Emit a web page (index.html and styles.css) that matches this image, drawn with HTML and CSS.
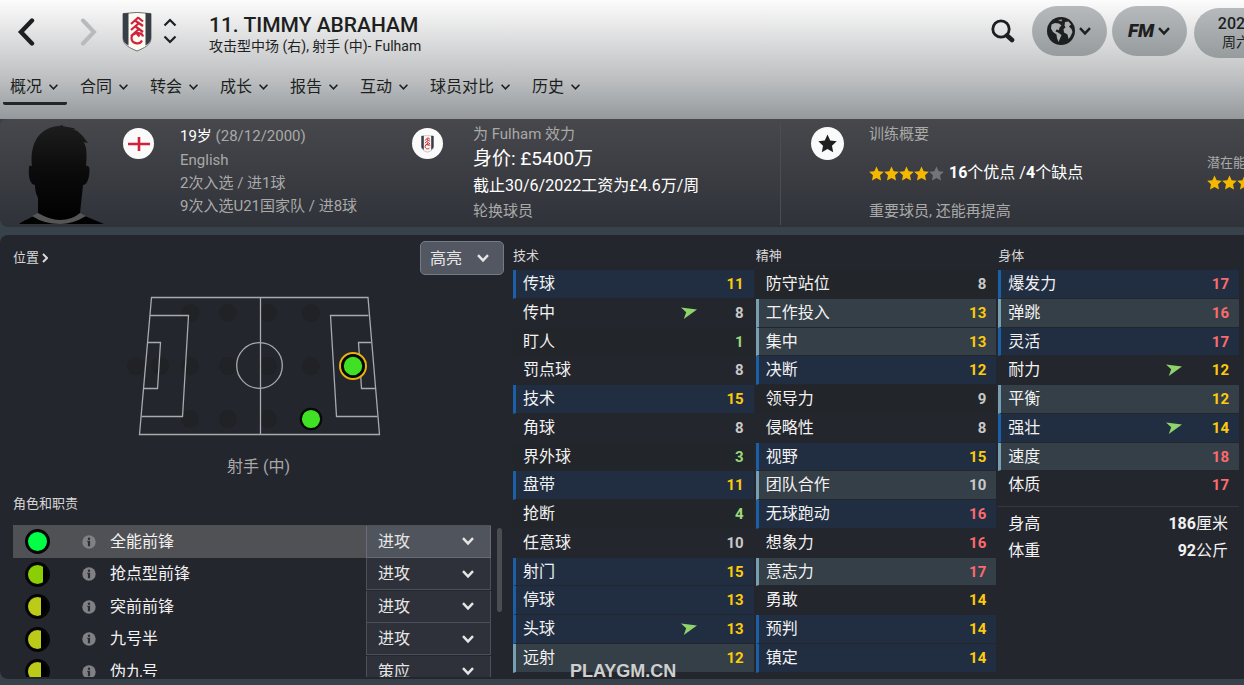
FILE: index.html
```html
<!DOCTYPE html>
<html lang="zh-CN"><head>
<meta charset="utf-8">
<meta name="viewport" content="width=device-width, initial-scale=1.0">
<title>Timmy Abraham</title>

<link rel="stylesheet" href="styles.css">

</head><body>

<svg class="defs" width="0" height="0">
	<symbol id="chevron" viewBox="0 0 14 10"><path d="M2 2.2 L7 7.4 L12 2.2" fill="none" stroke="currentColor" /></symbol>
	<symbol id="star" viewBox="0 0 20 20"><path d="M10 0.6 L12.9 6.9 L19.7 7.7 L14.7 12.4 L16 19.2 L10 15.9 L4 19.2 L5.3 12.4 L0.3 7.7 L7.1 6.9 Z" fill="currentColor" /></symbol>
	<symbol id="crest" viewBox="0 0 30 40">
		<path d="M1 1.6 Q15 -0.8 29 1.6 V26 C29 33 22 36 15 39 C8 36 1 33 1 26 Z" fill="#fbfbf2" stroke="#6c7073" stroke-width="1" />
		<path d="M1 1.6 L6.5 1 V33.6 C3 31.6 1 29 1 26 Z M29 1.6 L23.5 1 V33.6 C27 31.6 29 29 29 26 Z" fill="#363d45" />
		<path d="M9 12 L16.5 5.2 M13 8.500 L21 14 M9 18 L16.500 11.500 M13.500 14.500 L21 20 M9 24 L16.500 17.500 M16 5.500 L21 9.500 M21 24.500 C20 19.500 9.500 20 9.500 26 C9.500 31.500 17.500 33.500 20 28.500 M14 20.500 L17.500 24.500" fill="none" stroke="#d3203c" stroke-width="2.200" />
	</symbol>
	<symbol id="info" viewBox="0 0 14 14"><circle cx="7" cy="7" r="6.7" fill="currentColor" /><circle cx="7" cy="3.7" r="1.2" fill="#2b2d33" /><path d="M5.3 5.8 H8.1 V11.2 H5.9 V7 H5.3 Z" fill="#2b2d33" /></symbol>
	<symbol id="arrow" viewBox="0 0 16 12"><path d="M0 0.5 L16 2.4 L2.8 12 L5.2 5.2 Z" fill="#8fd36b" /></symbol>
</svg>

<header class="top">
	<div class="title-bar">
		<button class="back" aria-label="后退"><svg width="18" height="28" viewBox="0 0 18 28"><path d="M15 2.5 L4 14 L15 25.5" fill="none" stroke="#1d1f21" stroke-width="4.4" stroke-linecap="round" /></svg></button>
		<button class="forward" aria-label="前进"><svg width="18" height="28" viewBox="0 0 18 28"><path d="M3 2.5 L14 14 L3 25.5" fill="none" stroke="#b9babb" stroke-width="4" stroke-linecap="round" /></svg></button>
		<svg class="club" width="30" height="40"><use href="#crest" /></svg>
		<button class="switch" aria-label="切换球员"><svg width="14" height="28" viewBox="0 0 14 28"><path d="M1.5 8.5 L7 3 L12.5 8.5 M1.5 19.5 L7 25 L12.5 19.5" fill="none" stroke="#1d1f21" stroke-width="2.2" /></svg></button>
		<div class="name">
			<h1>11. TIMMY ABRAHAM</h1>
			<p>攻击型中场 (右), 射手 (中)- Fulham</p>
		</div>
		<div class="tools">
			<button class="search" aria-label="搜索"><svg width="24" height="24" viewBox="0 0 24 24"><circle cx="10" cy="10" r="8.2" fill="none" stroke="#1d1f21" stroke-width="2.8" /><path d="M16 16.5 L21 21" stroke="#1d1f21" stroke-width="4.6" stroke-linecap="round" /></svg></button>
			<button class="pill" aria-label="世界">
				<svg width="28" height="28" viewBox="0 0 28 28"><circle cx="14" cy="14" r="14" fill="#1d1f21" /><path d="M4.5 7.5 L8 6 L12 6.5 L14.5 8.5 L12.5 10.5 L12 13 L9.5 12.5 L8.5 14.5 L11 15.5 L14.5 18 L13 21.5 L11.5 25 L10 21 L9.5 17.5 L6 15 L4 11.5 Z M18 5 L21.5 4.5 L24 7.5 L22 9.5 L24.5 12 L25.5 15 L23.5 19.5 L21.5 22 L20.5 17.5 L17 15.5 L16.5 12 L18.5 10.5 L17.5 8.5 Z M11 3 L15 2.5 L14.5 4.5 Z" fill="#abafb1" /></svg>
				<svg width="14" height="10"><use href="#chevron" /></svg>
			</button>
			<button class="pill"><span class="fm">FM</span><svg width="14" height="10"><use href="#chevron" /></svg></button>
			<button class="pill date"><b>2020</b><span>周六</span></button>
		</div>
	</div>
	<nav>
		<a href="#" class="active">概况<svg><use href="#chevron" /></svg></a>
		<a href="#">合同<svg><use href="#chevron" /></svg></a>
		<a href="#">转会<svg><use href="#chevron" /></svg></a>
		<a href="#">成长<svg><use href="#chevron" /></svg></a>
		<a href="#">报告<svg><use href="#chevron" /></svg></a>
		<a href="#">互动<svg><use href="#chevron" /></svg></a>
		<a href="#">球员对比<svg><use href="#chevron" /></svg></a>
		<a href="#">历史<svg><use href="#chevron" /></svg></a>
	</nav>
</header>

<section class="summary">
	<svg class="portrait" width="88" height="102" viewBox="0 0 88 102">
		<defs><linearGradient id="skin" x1="0" y1="0" x2="0" y2="1"><stop offset="0" stop-color="#1d1d1d" /><stop offset="0.5" stop-color="#0a0a0a" /><stop offset="1" stop-color="#000" /></linearGradient></defs>
		<path d="M14 42 C12 25 17 4 41 2 L46 0.5 L44 2 L58 4.5 L55 5 C61 7 65 12 70 19 L66 18 L68 24 C69 30 68.500 36 68 42 C72 41 72 46 71 52 C70 57 68 61 65 61 C64 72 63 78 62 90 L86 100 H1 C5 97 12 94 20 90 V74 C18 70 17 66 17 61 C12 61 10 52 11 44 C11 41 12 41 14 42 Z" fill="url(#skin)" />
		<path d="M20 89 Q32 96 42 96 Q54 96 62 89 L68 92 Q55 100 42 100 Q26 100 14 92 Z" fill="#555557" />
	</svg>
	<div class="fact nation">
		<span class="badge"><svg width="22" height="14" viewBox="0 0 22 14"><path d="M0 7 H22 M11 0 V14" stroke="#d3203c" stroke-width="2.6" /></svg></span>
		<div>
			<p class="age"><strong>19岁</strong> (28/12/2000)</p>
			<p>English</p>
			<p>2次入选 / 进1球</p>
			<p>9次入选U21国家队 / 进8球</p>
		</div>
	</div>
	<div class="fact contract">
		<span class="badge"><svg width="13" height="18" viewBox="0 0 30 40"><use href="#crest" /></svg></span>
		<div>
			<p>为 Fulham 效力</p>
			<p class="value">身价: £5400万</p>
			<p class="wage">截止30/6/2022工资为£4.6万/周</p>
			<p>轮换球员</p>
		</div>
	</div>
	<div class="fact training">
		<span class="badge big"><svg width="19" height="19"><use href="#star" /></svg></span>
		<div>
			<p>训练概要</p>
			<p class="rating"><span class="stars"><svg><use href="#star" /></svg><svg><use href="#star" /></svg><svg><use href="#star" /></svg><svg><use href="#star" /></svg><svg class="off"><use href="#star" /></svg></span><span><b>16</b>个优点 /<b>4</b>个缺点</span></p>
			<p>重要球员, 还能再提高</p>
		</div>
	</div>
	<div class="potential">
		<p>潜在能力</p>
		<span class="stars"><svg><use href="#star" /></svg><svg><use href="#star" /></svg><svg><use href="#star" /></svg></span>
	</div>
</section>

<main>
	<section class="position">
		<div class="position-head">
			<a href="#">位置<svg width="6" height="10" viewBox="0 0 6 10"><path d="M1 1 L5 5 L1 9" fill="none" stroke="currentColor" stroke-width="2" /></svg></a>
			<label class="drop highlight"><select aria-label="高亮"><option>高亮</option></select><svg width="14" height="10"><use href="#chevron" /></svg></label>
		</div>
		<svg class="field" width="266" height="150" viewBox="126 291 266 150">
			<g fill="#202226">
				<circle cx="190" cy="313" r="9" /><circle cx="228" cy="313" r="9" /><circle cx="268" cy="313" r="9" /><circle cx="311" cy="313" r="9" />
				<circle cx="136" cy="366" r="9" /><circle cx="160" cy="366" r="9" /><circle cx="190" cy="366" r="9" /><circle cx="228" cy="366" r="9" /><circle cx="268" cy="366" r="9" /><circle cx="311" cy="366" r="9" />
				<circle cx="190" cy="419" r="9" /><circle cx="228" cy="419" r="9" /><circle cx="268" cy="419" r="9" />
			</g>
			<g fill="none" stroke="#a9aaac" stroke-width="1.300">
				<path d="M151.500 297.500 H368 L379.500 434.500 H139.500 Z M260.500 297.500 V434.500" />
				<path d="M150 315.500 H188.500 L182.500 417 M141.500 416.500 H183 M147.500 342.500 H160.500 L157.500 389 M143.500 388.500 H158" />
				<path d="M368.500 315.500 H330.500 L336.500 416.500 H377.500 M371 342.500 H358.500 L361.500 388.500 H375" />
				<circle cx="259.500" cy="365.500" r="22.800" />
			</g>
			<circle cx="353" cy="366" r="13" fill="#24272e" stroke="#e9b20c" stroke-width="2" />
			<circle cx="353" cy="366" r="10.500" fill="#40e024" stroke="#050805" stroke-width="2.600" />
			<circle cx="311" cy="419" r="10.200" fill="#40e024" stroke="#050805" stroke-width="2.200" />
		</svg>
		<p class="position-name">射手 (中)</p>
		<h2>角色和职责</h2>
		<div class="roles">
			<table>
				<tr class="selected"><td class="fit"><i class="full"></i></td><td class="info"><svg><use href="#info" /></svg></td><th>全能前锋</th><td class="duty"><label class="drop"><select aria-label="全能前锋"><option>进攻</option></select><svg width="14" height="10"><use href="#chevron" /></svg></label></td></tr>
				<tr><td class="fit"><i class="most"></i></td><td class="info"><svg><use href="#info" /></svg></td><th>抢点型前锋</th><td class="duty"><label class="drop"><select aria-label="抢点型前锋"><option>进攻</option></select><svg width="14" height="10"><use href="#chevron" /></svg></label></td></tr>
				<tr><td class="fit"><i></i></td><td class="info"><svg><use href="#info" /></svg></td><th>突前前锋</th><td class="duty"><label class="drop"><select aria-label="突前前锋"><option>进攻</option></select><svg width="14" height="10"><use href="#chevron" /></svg></label></td></tr>
				<tr><td class="fit"><i></i></td><td class="info"><svg><use href="#info" /></svg></td><th>九号半</th><td class="duty"><label class="drop"><select aria-label="九号半"><option>进攻</option></select><svg width="14" height="10"><use href="#chevron" /></svg></label></td></tr>
				<tr><td class="fit"><i></i></td><td class="info"><svg><use href="#info" /></svg></td><th>伪九号</th><td class="duty"><label class="drop"><select aria-label="伪九号"><option>策应</option></select><svg width="14" height="10"><use href="#chevron" /></svg></label></td></tr>
			</table>
			<div class="scroll"></div>
		</div>
	</section>

	<section class="attributes">
		<div>
			<h2>技术</h2>
			<table>
				<tr class="key"><th>传球</th><td class="good">11</td></tr>
				<tr><th>传中</th><td><svg><use href="#arrow" /></svg>8</td></tr>
				<tr><th>盯人</th><td class="low">1</td></tr>
				<tr><th>罚点球</th><td>8</td></tr>
				<tr class="key"><th>技术</th><td class="good">15</td></tr>
				<tr><th>角球</th><td>8</td></tr>
				<tr><th>界外球</th><td class="low">3</td></tr>
				<tr class="key"><th>盘带</th><td class="good">11</td></tr>
				<tr><th>抢断</th><td class="low">4</td></tr>
				<tr><th>任意球</th><td>10</td></tr>
				<tr class="key"><th>射门</th><td class="good">15</td></tr>
				<tr class="key"><th>停球</th><td class="good">13</td></tr>
				<tr class="key"><th>头球</th><td class="good"><svg><use href="#arrow" /></svg>13</td></tr>
				<tr class="useful"><th>远射</th><td class="good">12</td></tr>
			</table>
		</div>
		<div>
			<h2>精神</h2>
			<table>
				<tr><th>防守站位</th><td>8</td></tr>
				<tr class="useful"><th>工作投入</th><td class="good">13</td></tr>
				<tr class="useful"><th>集中</th><td class="good">13</td></tr>
				<tr class="key"><th>决断</th><td class="good">12</td></tr>
				<tr><th>领导力</th><td>9</td></tr>
				<tr><th>侵略性</th><td>8</td></tr>
				<tr class="key"><th>视野</th><td class="good">15</td></tr>
				<tr class="useful"><th>团队合作</th><td>10</td></tr>
				<tr class="key"><th>无球跑动</th><td class="top-mark">16</td></tr>
				<tr><th>想象力</th><td class="top-mark">16</td></tr>
				<tr class="useful"><th>意志力</th><td class="top-mark">17</td></tr>
				<tr><th>勇敢</th><td class="good">14</td></tr>
				<tr class="key"><th>预判</th><td class="good">14</td></tr>
				<tr class="key"><th>镇定</th><td class="good">14</td></tr>
			</table>
		</div>
		<div>
			<h2>身体</h2>
			<table>
				<tr class="key"><th>爆发力</th><td class="top-mark">17</td></tr>
				<tr class="useful"><th>弹跳</th><td class="top-mark">16</td></tr>
				<tr class="key"><th>灵活</th><td class="top-mark">17</td></tr>
				<tr><th>耐力</th><td class="good"><svg><use href="#arrow" /></svg>12</td></tr>
				<tr class="useful"><th>平衡</th><td class="good">12</td></tr>
				<tr class="key"><th>强壮</th><td class="good"><svg><use href="#arrow" /></svg>14</td></tr>
				<tr class="useful"><th>速度</th><td class="top-mark">18</td></tr>
				<tr><th>体质</th><td class="top-mark">17</td></tr>
			</table>
			<dl>
				<dt>身高</dt><dd><b>186</b>厘米</dd>
				<dt>体重</dt><dd><b>92</b>公斤</dd>
			</dl>
		</div>
	</section>
	<span class="mark">PLAYGM.CN</span>
</main>

</body></html>
```
FILE: styles.css
```css
* {
	box-sizing : border-box ;
	margin : 0 ;
	padding : 0 ;
	}
body {
	display : flex ;
	flex-direction : column ;
	height : 100vh ;
	min-height : 685px ;
	overflow-x : hidden ;
	background : #38424a ;
	color : #f2f2f2 ;
	font-family : Roboto, "Noto Sans CJK SC", sans-serif ;
	font-size : 16px ;
	line-height : 24px ;
	}
button, select {
	border : none ;
	background : none ;
	color : inherit ;
	font : inherit ;
	}
a {
	color : inherit ;
	text-decoration : none ;
	}
svg {
	display : block ;
	flex : none ;
	stroke-width : 2.4 ;
	}
svg.defs {
	position : absolute ;
	}
table {
	width : 100% ;
	border-spacing : 0 ;
	}
th {
	font-weight : normal ;
	text-align : left ;
	}
h2 {
	font-size : 13px ;
	line-height : 20px ;
	font-weight : normal ;
	color : #d8d8d8 ;
	}

/* header */
header.top {
	flex : none ;
	height : 119px ;
	overflow : hidden ;
	background : linear-gradient( #fcfcfc, #c0c1c3 64%, #b4b7b9 74%, #96999c ) ;
	color : #1d1f21 ;
	}
div.title-bar {
	display : flex ;
	height : 66px ;
	padding-left : 17px ;
	}
button.back, button.forward {
	height : 64px ;
	}
button.forward {
	margin-left : 45px ;
	}
svg.club {
	margin : 12px 0 0 24px ;
	}
button.switch {
	height : 61px ;
	margin-left : 11px ;
	}
div.name {
	margin : 13px 0 0 32px ;
	white-space : nowrap ;
	}
div.name h1 {
	font-size : 21px ;
	line-height : 24px ;
	font-weight : 500 ;
	}
div.name p {
	font-size : 14px ;
	line-height : 18px ;
	}
div.tools {
	display : flex ;
	gap : 5px ;
	margin : 6px -34px 0 auto ;
	}
button.search {
	height : 50px ;
	margin-right : 12px ;
	}
button.pill {
	display : flex ;
	align-items : center ;
	justify-content : center ;
	gap : 3px ;
	width : 75px ;
	height : 50px ;
	border-radius : 25px ;
	background : linear-gradient( #b6babc, #969b9d ) ;
	}
button.pill.date {
	flex-direction : column ;
	gap : 0 ;
	width : 84px ;
	margin : 2px 0 0 2px ;
	font-size : 16px ;
	line-height : 18px ;
	}
button.date b {
	font-weight : 500 ;
	}
button.date span {
	font-size : 14px ;
	}
span.fm {
	font-size : 19px ;
	font-weight : 900 ;
	font-style : italic ;
	}
nav {
	display : flex ;
	gap : 6px ;
	padding-left : 3px ;
	}
nav a {
	display : flex ;
	align-items : center ;
	gap : 6px ;
	height : 39px ;
	padding : 5px 9px 0 7px ;
	border-bottom : 3px solid transparent ;
	white-space : nowrap ;
	}
nav a.active {
	border-color : #232527 ;
	border-radius : 2px ;
	}
nav svg {
	width : 11px ;
	height : 8px ;
	margin-right : -1px ;
	stroke-width : 2 ;
	}

/* player summary */
section.summary {
	display : flex ;
	flex : none ;
	height : 108px ;
	overflow : hidden ;
	border-radius : 8px 0 0 8px ;
	background : linear-gradient( #47484c, #2f3239 ) ;
	color : #a9a9a8 ;
	font-size : 15px ;
	white-space : nowrap ;
	}
svg.portrait {
	margin : 5px 0 0 18px ;
	}
div.fact {
	display : flex ;
	flex : none ;
	}
div.fact p {
	line-height : 23px ;
	}
div.fact p.age {
	line-height : 26px ;
	}
div.nation {
	width : 306px ;
	padding : 4px 0 0 17px ;
	}
div.contract {
	width : 369px ;
	margin : 3px 0 2px ;
	padding-top : 1px ;
	border-right : 1px solid #4b4d52 ;
	}
div.training {
	flex : 1 ;
	padding : 4px 0 0 30px ;
	}
span.badge {
	display : flex ;
	flex : none ;
	align-items : center ;
	justify-content : center ;
	width : 31px ;
	height : 31px ;
	margin : 5px 26px 0 0 ;
	border-radius : 50% ;
	background : #fafafa ;
	color : #1d1f21 ;
	}
div.contract span.badge {
	margin-right : 30px ;
	}
span.badge.big {
	width : 33px ;
	height : 33px ;
	margin : 4px 25px 0 0 ;
	}
strong, p.value, p.wage, p.rating {
	color : #fff ;
	font-weight : normal ;
	}
div.fact p.value {
	font-size : 19px ;
	line-height : 26px ;
	}
div.fact p.wage {
	font-size : 16px ;
	line-height : 28px ;
	}
div.fact p.rating {
	display : flex ;
	align-items : center ;
	gap : 5px ;
	margin : 8px 0 ;
	font-size : 16px ;
	line-height : 38px ;
	}
span.stars {
	display : flex ;
	color : #f5b800 ;
	}
span.stars svg {
	width : 15px ;
	height : 15px ;
	}
span.stars svg.off {
	color : #737478 ;
	}
div.potential {
	flex : none ;
	width : 37px ;
	padding-top : 34px ;
	font-size : 13px ;
	line-height : 20px ;
	}
div.potential span.stars {
	margin-top : 2px ;
	}

/* main panel */
main {
	position : relative ;
	display : flex ;
	flex : 1 ;
	min-height : 0 ;
	margin : 8px 0 6px ;
	border-radius : 8px 0 0 8px ;
	background : #24262e ;
	}
section.position {
	display : flex ;
	flex-direction : column ;
	width : 504px ;
	padding : 6px 0 2px 13px ;
	}
div.position-head {
	display : flex ;
	justify-content : space-between ;
	font-size : 13px ;
	}
div.position-head a {
	display : flex ;
	align-items : center ;
	gap : 3px ;
	height : 33px ;
	color : #d8d8d8 ;
	}
label.drop {
	display : flex ;
	align-items : center ;
	color : #e6e6e6 ;
	}
label.drop select {
	flex : 1 ;
	width : 0 ;
	height : 100% ;
	padding-top : 1px ;
	font-size : 16px ;
	appearance : none ;
	}
label.highlight {
	width : 84px ;
	height : 34px ;
	padding : 0 13px 0 9px ;
	border : 1px solid #737b89 ;
	border-radius : 5px ;
	background : #525761 ;
	}
svg.field {
	align-self : center ;
	margin-top : 16px ;
	}
p.position-name {
	margin : 14px 0 15px ;
	color : #a9a9a8 ;
	text-align : center ;
	}
div.roles {
	display : flex ;
	flex : 1 ;
	min-height : 0 ;
	align-items : flex-start ;
	gap : 6px ;
	margin-top : 11px ;
	overflow : hidden ;
	}
div.scroll {
	flex : none ;
	width : 5px ;
	height : 84px ;
	margin : 3px 2px 0 0 ;
	border-radius : 3px ;
	background : #4b4d52 ;
	}
div.roles tr {
	height : 33px ;
	}
div.roles tr:nth-child(even) {
	height : 32px ;
	}
tr.selected {
	background : #505155 ;
	}
td.fit {
	width : 69px ;
	padding-left : 12px ;
	}
td.fit i {
	display : block ;
	width : 25px ;
	height : 25px ;
	border : 3px solid #060606 ;
	border-radius : 50% ;
	background : linear-gradient( to right, #bccb18 68%, #000 68% ) ;
	}
td.fit i.most {
	background : linear-gradient( to right, #8cce05 78%, #000 78% ) ;
	}
td.fit i.full {
	background : #00ff45 ;
	}
td.info {
	width : 28px ;
	color : #808185 ;
	}
td.info svg {
	width : 14px ;
	height : 14px ;
	}
td.duty {
	width : 125px ;
	}
td.duty label {
	height : 32px ;
	padding : 0 15px 0 11px ;
	border : 1px solid #4b505b ;
	border-top : none ;
	background : #2e3139 ;
	}
tr.selected label {
	border-color : #666b76 ;
	background : #50545d ;
	}

/* attributes */
section.attributes {
	display : grid ;
	flex : 1 ;
	grid-template-columns : repeat( 3, 1fr ) ;
	gap : 2px ;
	padding : 11px 5px 0 9px ;
	}
section.attributes table {
	margin-top : 4px ;
	}
section.attributes tr {
	height : 29px ;
	}
section.attributes tr:nth-child(4n+3) {
	height : 28px ;
	}
section.attributes tr:nth-child(odd) {
	background : #222529 ;
	}
section.attributes th, section.attributes td {
	border-bottom : 1px solid #24262e ;
	line-height : 20px ;
	}
section.attributes th {
	padding-left : 7px ;
	border-left : 3px solid transparent ;
	}
section.attributes td {
	width : 73px ;
	padding-right : 10px ;
	color : #c9c9c9 ;
	font-size : 15px ;
	font-weight : bold ;
	text-align : right ;
	}
section.attributes td svg {
	float : left ;
	width : 16px ;
	height : 12px ;
	margin-top : 4px ;
	}
section.attributes tr.key {
	background : #212e42 ;
	}
section.attributes tr.key th {
	border-left-color : #1b5fa6 ;
	}
section.attributes tr.useful {
	background : #353f47 ;
	}
section.attributes tr.useful th {
	border-left-color : #76a0b2 ;
	}
section.attributes td.good {
	color : #fdcb0a ;
	}
section.attributes td.low {
	color : #9bd97c ;
	}
section.attributes td.top-mark {
	color : #fb6a6e ;
	}
dl {
	display : grid ;
	grid-template-columns : 1fr auto ;
	margin-top : 6px ;
	padding : 3px 11px 0 10px ;
	border-top : 1px solid #36383e ;
	line-height : 27px ;
	}
dd {
	text-align : right ;
	}
span.mark {
	position : absolute ;
	left : 570px ;
	bottom : -4px ;
	color : #cfcfcf ;
	font : bold 18px/24px "Liberation Sans", sans-serif ;
	}
```
